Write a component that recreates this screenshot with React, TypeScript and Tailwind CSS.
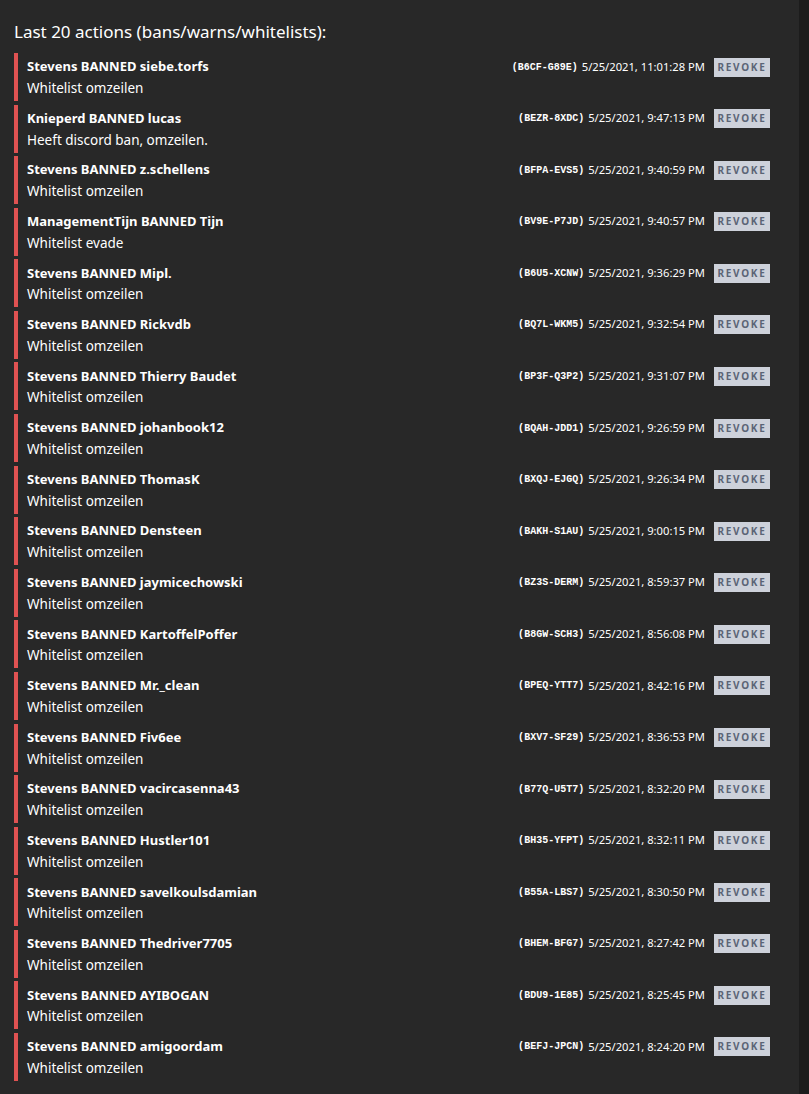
const actions: [string, string, string, string, string][] = [
  ['Stevens', 'siebe.torfs', 'Whitelist omzeilen', 'B6CF-G89E', '5/25/2021, 11:01:28 PM'],
  ['Knieperd', 'lucas', 'Heeft discord ban, omzeilen.', 'BEZR-8XDC', '5/25/2021, 9:47:13 PM'],
  ['Stevens', 'z.schellens', 'Whitelist omzeilen', 'BFPA-EVS5', '5/25/2021, 9:40:59 PM'],
  ['ManagementTijn', 'Tijn', 'Whitelist evade', 'BV9E-P7JD', '5/25/2021, 9:40:57 PM'],
  ['Stevens', 'Mipl.', 'Whitelist omzeilen', 'B6U5-XCNW', '5/25/2021, 9:36:29 PM'],
  ['Stevens', 'Rickvdb', 'Whitelist omzeilen', 'BQ7L-WKM5', '5/25/2021, 9:32:54 PM'],
  ['Stevens', 'Thierry Baudet', 'Whitelist omzeilen', 'BP3F-Q3P2', '5/25/2021, 9:31:07 PM'],
  ['Stevens', 'johanbook12', 'Whitelist omzeilen', 'BQAH-JDD1', '5/25/2021, 9:26:59 PM'],
  ['Stevens', 'ThomasK', 'Whitelist omzeilen', 'BXQJ-EJGQ', '5/25/2021, 9:26:34 PM'],
  ['Stevens', 'Densteen', 'Whitelist omzeilen', 'BAKH-S1AU', '5/25/2021, 9:00:15 PM'],
  ['Stevens', 'jaymicechowski', 'Whitelist omzeilen', 'BZ3S-DERM', '5/25/2021, 8:59:37 PM'],
  ['Stevens', 'KartoffelPoffer', 'Whitelist omzeilen', 'B8GW-SCH3', '5/25/2021, 8:56:08 PM'],
  ['Stevens', 'Mr._clean', 'Whitelist omzeilen', 'BPEQ-YTT7', '5/25/2021, 8:42:16 PM'],
  ['Stevens', 'Fiv6ee', 'Whitelist omzeilen', 'BXV7-SF29', '5/25/2021, 8:36:53 PM'],
  ['Stevens', 'vacircasenna43', 'Whitelist omzeilen', 'B77Q-U5T7', '5/25/2021, 8:32:20 PM'],
  ['Stevens', 'Hustler101', 'Whitelist omzeilen', 'BH35-YFPT', '5/25/2021, 8:32:11 PM'],
  ['Stevens', 'savelkoulsdamian', 'Whitelist omzeilen', 'B55A-LBS7', '5/25/2021, 8:30:50 PM'],
  ['Stevens', 'Thedriver7705', 'Whitelist omzeilen', 'BHEM-BFG7', '5/25/2021, 8:27:42 PM'],
  ['Stevens', 'AYIBOGAN', 'Whitelist omzeilen', 'BDU9-1E85', '5/25/2021, 8:25:45 PM'],
  ['Stevens', 'amigoordam', 'Whitelist omzeilen', 'BEFJ-JPCN', '5/25/2021, 8:24:20 PM'],
];

export default function App() {
  return (
    <div className="flex min-h-[1094px] bg-[#282828] text-white" style={{ fontFamily: '"Noto Sans", "Open Sans", sans-serif' }}>
      <div className="w-[799px] pl-[14px] pr-[29px] pt-[20px]">
        <h2 className="text-[17px] leading-[24px] font-normal mb-[9px]">Last 20 actions (bans/warns/whitelists):</h2>
        <div className="flex flex-col gap-[3.58px]">
          {actions.map(([by, target, reason, code, date]) => (
            <div key={code} className="h-[48px] border-l-4 border-[#e05252] pl-[9px] flex flex-col">
              <div className="flex items-center justify-between h-[28px]">
                <span className="text-[13px] font-bold">
                  {by} BANNED {target}
                </span>
                <div className="flex items-center">
                  <span className="text-[10px] font-bold" style={{ fontFamily: '"Liberation Mono", monospace' }}>
                    ({code})
                  </span>
                  <span className="text-[11.2px] ml-[4px]">{date}</span>
                  <button className="ml-[9px] h-[19px] w-[56px] bg-[#cdd1da] text-[#5b6476] text-[10px] font-bold tracking-[1.7px] flex items-center justify-center">
                    REVOKE
                  </button>
                </div>
              </div>
              <div className="text-[13.5px] leading-[14px]">{reason}</div>
            </div>
          ))}
        </div>
      </div>
      <div className="w-[10px] bg-[#1c1c1c]" />
    </div>
  );
}
